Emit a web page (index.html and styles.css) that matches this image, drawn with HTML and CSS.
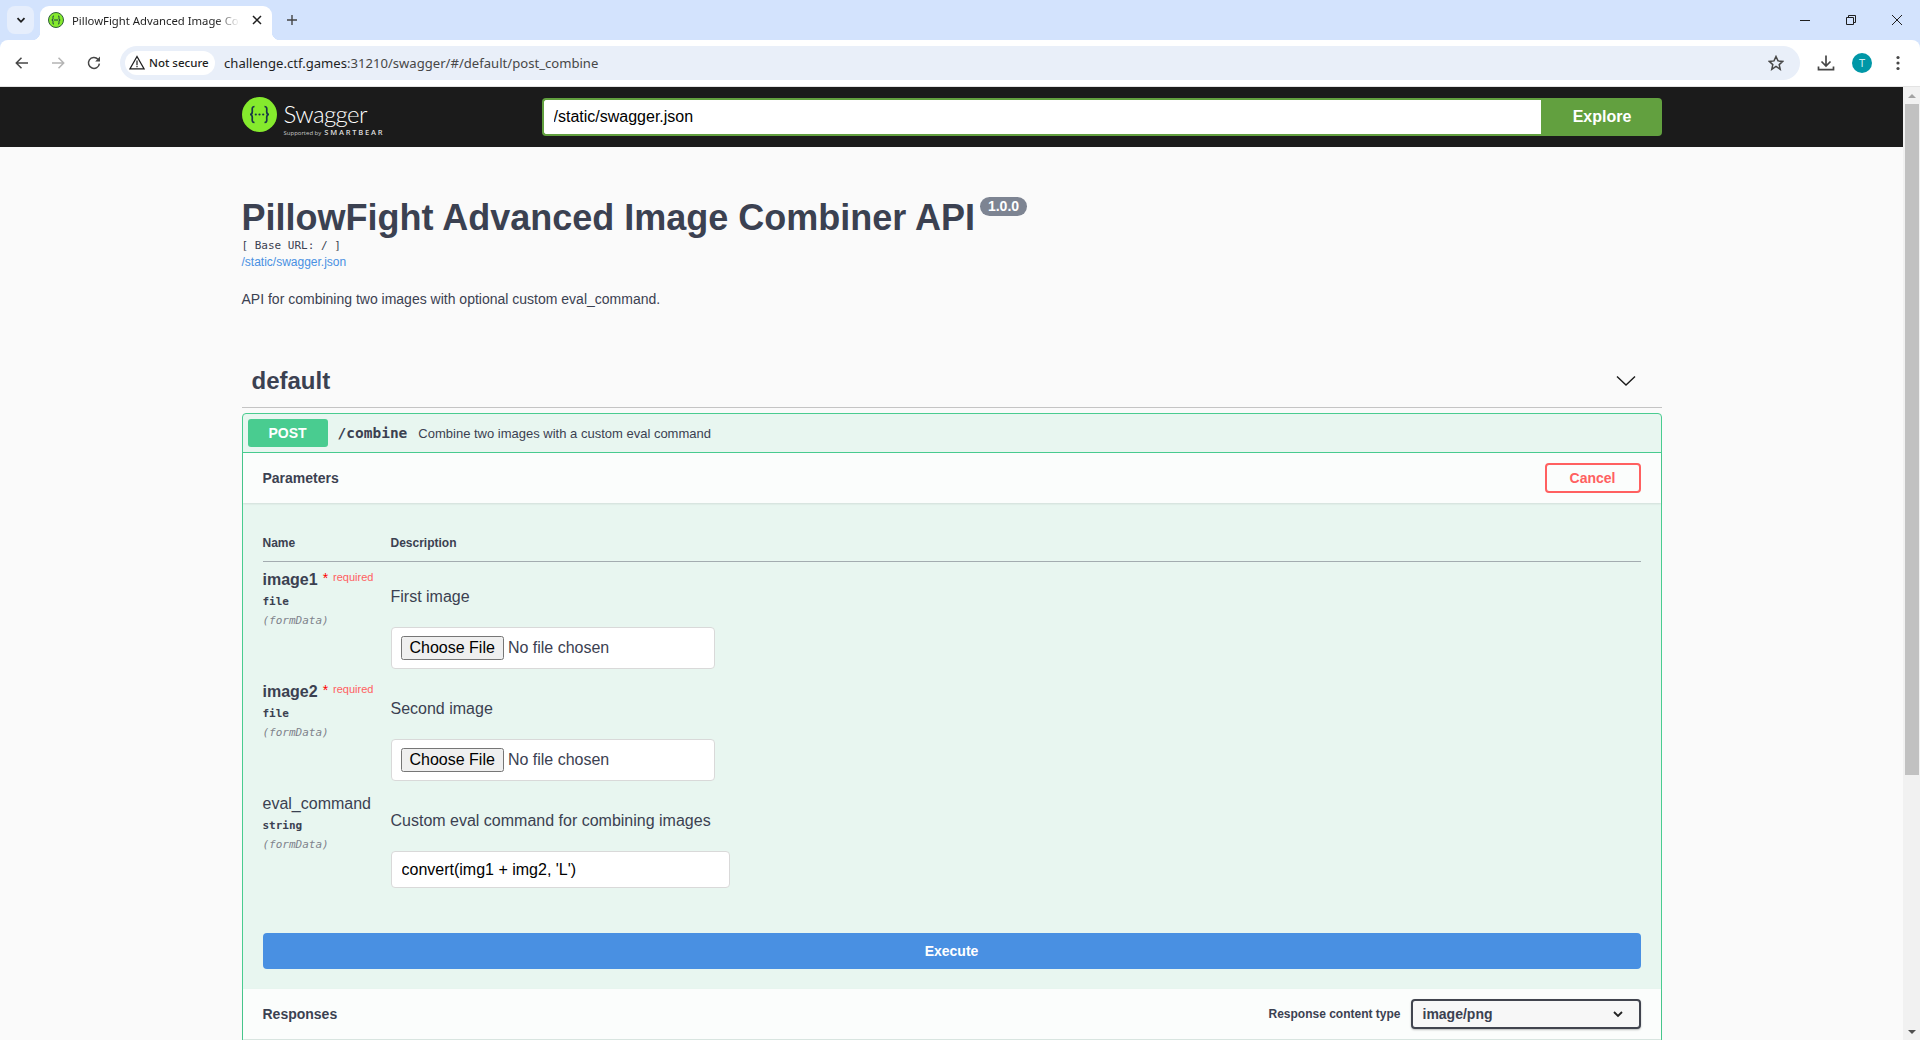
FILE: index.html
```html
<!DOCTYPE html>
<html lang="en">
<head>
  <meta charset="UTF-8" />
  <meta name="viewport" content="width=device-width, initial-scale=1.0" />
  <title>PillowFight Advanced Image Combiner API</title>
  <link rel="stylesheet" href="styles.css">
</head>
<body>
  <div class="tabstrip">
    <div class="tab-search">
      <svg width="12" height="12" viewBox="0 0 12 12"><path d="M2.5 4.2 6 7.8l3.5-3.6" fill="none" stroke="#1f1f1f" stroke-width="1.8"/></svg>
    </div>
    <div class="tab">
      <svg class="favicon" width="16" height="16" viewBox="0 0 16 16">
        <circle cx="8" cy="8" r="7.5" fill="#85ea2d" stroke="#2f5f3a" stroke-width="1"/>
        <path d="M6 3.8C4.6 3.8 5 5.5 5 6.6 5 7.5 4.5 8 3.8 8c.7 0 1.2.5 1.2 1.4 0 1.1-.4 2.8 1 2.8M10 3.8c1.4 0 1 1.7 1 2.8 0 .9.5 1.4 1.2 1.4-.7 0-1.2.5-1.2 1.4 0 1.1.4 2.8-1 2.8M6 8h4" fill="none" stroke="#173647" stroke-width="1"/>
      </svg>
      <span class="tab-title">PillowFight Advanced Image Combiner API</span>
      <svg class="tab-close" width="10" height="10" viewBox="0 0 10 10"><path d="M1 1l8 8M9 1 1 9" stroke="#1f1f1f" stroke-width="1.5"/></svg>
    </div>
    <svg class="tab-new" width="12" height="12" viewBox="0 0 12 12"><path d="M6 1v10M1 6h10" stroke="#444" stroke-width="1.4"/></svg>
    <div class="window-controls">
      <div class="window-btn"><svg width="12" height="12" viewBox="0 0 12 12"><path d="M1 6.5h10" stroke="#1f1f1f"/></svg></div>
      <div class="window-btn"><svg width="12" height="12" viewBox="0 0 12 12"><path d="M1.5 3.5h7v7h-7zM3.5 3.5v-2h7v7h-2" fill="none" stroke="#1f1f1f"/></svg></div>
      <div class="window-btn"><svg width="12" height="12" viewBox="0 0 12 12"><path d="M1 1l10 10M11 1 1 11" stroke="#1f1f1f"/></svg></div>
    </div>
  </div>

  <div class="toolbar">
    <div class="nav-btn"><svg width="16" height="16" viewBox="0 0 16 16"><path d="M14 8H2.5M7.5 2.8 2.3 8l5.2 5.2" fill="none" stroke="#474747" stroke-width="1.5"/></svg></div>
    <div class="nav-btn"><svg width="16" height="16" viewBox="0 0 16 16"><path d="M2 8h11.5M8.5 2.8 13.7 8l-5.2 5.2" fill="none" stroke="#b4b4b4" stroke-width="1.5"/></svg></div>
    <div class="nav-btn"><svg width="16" height="16" viewBox="0 0 16 16"><path d="M13.4 8.6A5.5 5.5 0 1 1 12 4.2L13.5 5.7" fill="none" stroke="#474747" stroke-width="1.5"/><path d="M14 1.6V6.4H9.2z" fill="#474747"/></svg></div>
    <div class="omnibox">
      <div class="chip">
        <svg width="16" height="15" viewBox="0 0 16 15"><path d="M8 1.5 15 13.8H1z" fill="none" stroke="#1f1f1f" stroke-width="1.3"/><path d="M8 5.5v4.5M8 10.8v1.4" stroke="#1f1f1f" stroke-width="1.2"/></svg>
        <span class="chip-text">Not secure</span>
      </div>
      <span class="url"><span class="url-host">challenge.ctf.games</span>:31210/swagger/#/default/post_combine</span>
      <svg class="star" width="16" height="16" viewBox="0 0 16 16"><path d="M8 1.5l2 4.4 4.8.5-3.6 3.2 1 4.7L8 11.4l-4.2 2.9 1-4.7L1.2 6.4 6 5.9z" fill="none" stroke="#474747" stroke-width="1.5"/></svg>
    </div>
    <div class="nav-btn"><svg width="18" height="18" viewBox="0 0 18 18"><path d="M9 1.5v10M4.5 7.5 9 12l4.5-4.5M1.5 12.5v3.2h15v-3.2" fill="none" stroke="#474747" stroke-width="1.7"/></svg></div>
    <div class="nav-btn"><div class="avatar">T</div></div>
    <div class="nav-btn"><svg width="4" height="16" viewBox="0 0 4 16"><circle cx="2" cy="2.5" r="1.6" fill="#474747"/><circle cx="2" cy="8" r="1.6" fill="#474747"/><circle cx="2" cy="13.5" r="1.6" fill="#474747"/></svg></div>
  </div>

  <div class="viewport">
    <div class="page">
      <div class="topbar">
        <div class="container topbar-inner">
          <div class="logo">
            <svg width="35" height="35" viewBox="0 0 35 35">
              <circle cx="17.5" cy="17.5" r="17.5" fill="#85ea2d"/>
              <path d="M12.5 9.5c-3 0-2.2 3.2-2.2 5 0 1.8-.9 3-2.3 3 1.4 0 2.3 1.2 2.3 3 0 1.8-.8 5 2.2 5M22.5 9.5c3 0 2.2 3.2 2.2 5 0 1.8.9 3 2.3 3-1.4 0-2.3 1.2-2.3 3 0 1.8.8 5-2.2 5" fill="none" stroke="#173647" stroke-width="1.7"/>
              <circle cx="13.8" cy="17.5" r="1.1" fill="#173647"/><circle cx="17.5" cy="17.5" r="1.1" fill="#173647"/><circle cx="21.2" cy="17.5" r="1.1" fill="#173647"/>
            </svg>
            <div class="logo-text">
              <span class="logo-name">Swagger</span>
              <span class="logo-sub">Supported by<b>SMARTBEAR</b></span>
            </div>
          </div>
          <div class="explore">
            <input class="explore-input" type="text" value="/static/swagger.json" />
            <button class="explore-btn">Explore</button>
          </div>
        </div>
      </div>

      <div class="container">
        <div class="info">
          <div class="title-row">
            <h2 class="title">PillowFight Advanced Image Combiner API</h2>
            <span class="version">1.0.0</span>
          </div>
          <div class="base-url">[ Base URL: / ]</div>
          <a class="spec-link" href="#">/static/swagger.json</a>
          <p class="desc">API for combining two images with optional custom eval_command.</p>
        </div>

        <div class="tag">
          <span class="tag-name">default</span>
          <svg width="20" height="20" viewBox="0 0 20 20"><path d="M1 5.500 10 14l9-8.500" fill="none" stroke="#1a1a1a" stroke-width="1.400"/></svg>
        </div>

        <div class="opblock">
          <div class="summary">
            <span class="method">POST</span>
            <span class="path">/combine</span>
            <span class="summary-desc">Combine two images with a custom eval command</span>
          </div>

          <div class="section-header">
            <span class="section-title">Parameters</span>
            <button class="cancel-btn">Cancel</button>
          </div>

          <div class="params">
            <div class="params-head">
              <span>Name</span>
              <span>Description</span>
            </div>

            <div class="param">
              <div class="param-name">
                <div class="param-title"><b>image1</b><span class="star-req">*</span><span class="req">required</span></div>
                <div class="param-type">file</div>
                <div class="param-in">(formData)</div>
              </div>
              <div class="param-desc">
                <p>First image</p>
                <input class="file-input" type="file" />
              </div>
            </div>

            <div class="param">
              <div class="param-name">
                <div class="param-title"><b>image2</b><span class="star-req">*</span><span class="req">required</span></div>
                <div class="param-type">file</div>
                <div class="param-in">(formData)</div>
              </div>
              <div class="param-desc">
                <p>Second image</p>
                <input class="file-input" type="file" />
              </div>
            </div>

            <div class="param">
              <div class="param-name">
                <div class="param-title">eval_command</div>
                <div class="param-type">string</div>
                <div class="param-in">(formData)</div>
              </div>
              <div class="param-desc">
                <p>Custom eval command for combining images</p>
                <input class="text-input" type="text" value="convert(img1 + img2, 'L')" />
              </div>
            </div>

            <button class="execute-btn">Execute</button>
          </div>

          <div class="section-header responses-header">
            <span class="section-title">Responses</span>
            <div class="content-type">
              <span class="content-type-label">Response content type</span>
              <div class="select">
                <span>image/png</span>
                <svg width="12" height="12" viewBox="0 0 12 12"><path d="M2 4l4 4 4-4" fill="none" stroke="#222" stroke-width="1.800"/></svg>
              </div>
            </div>
          </div>
          <div class="responses-body"></div>
        </div>
      </div>
    </div>

    <div class="scrollbar">
      <div class="scroll-btn"><span class="arrow-up"></span></div>
      <div class="scroll-thumb"></div>
      <div class="scroll-track"></div>
      <div class="scroll-btn"><span class="arrow-down"></span></div>
    </div>
  </div>
</body>
</html>
```

FILE: styles.css
```css
* {
  box-sizing: border-box;
}

html,
body {
  margin: 0;
  height: 100%;
  overflow: hidden;
}

body {
  display: flex;
  flex-direction: column;
  background: #d3e3fd;
  font-family: "Liberation Sans", Arial, sans-serif;
  color: #3b4151;
}

/* browser chrome */
.tabstrip {
  display: flex;
  height: 40px;
  flex-shrink: 0;
}

.tab-search {
  display: flex;
  align-items: center;
  justify-content: center;
  width: 27px;
  height: 28px;
  margin: 6px 0 0 7px;
  background: #e6eefc;
  border-radius: 8px;
}

.tab {
  position: relative;
  display: flex;
  align-items: center;
  width: 232px;
  height: 34px;
  margin: 6px 0 0 6px;
  padding: 0 10px 6px 8px;
  background: #fff;
  border-radius: 9px 9px 0 0;
}

.tab::before,
.tab::after {
  content: "";
  position: absolute;
  bottom: 0;
  width: 8px;
  height: 8px;
}

.tab::before {
  left: -8px;
  background: radial-gradient(circle at 0 0, #d3e3fd 8px, #fff 8.5px);
}

.tab::after {
  right: -8px;
  background: radial-gradient(circle at 100% 0, #d3e3fd 8px, #fff 8.500px);
}

.favicon {
  flex-shrink: 0;
}

.tab-title {
  flex: 1;
  margin-left: 8px;
  font: 11.300px "Noto Sans", sans-serif;
  color: #1f1f1f;
  white-space: nowrap;
  overflow: hidden;
  -webkit-mask-image: linear-gradient(to right, #000 85%, transparent 100%);
  mask-image: linear-gradient(to right, #000 85%, transparent 100%);
}

.tab-close {
  flex-shrink: 0;
  margin-left: 12px;
}

.tab-new {
  margin: 14px 0 0 14px;
}

.window-controls {
  display: flex;
  margin-left: auto;
}

.window-btn {
  display: flex;
  align-items: center;
  justify-content: center;
  width: 46px;
  height: 40px;
}

.toolbar {
  display: flex;
  align-items: center;
  height: 47px;
  flex-shrink: 0;
  padding: 0 4px 1px;
  background: #fff;
  border-radius: 8px 8px 0 0;
  border-bottom: 1px solid #e3e3e3;
}

.nav-btn {
  display: flex;
  align-items: center;
  justify-content: center;
  width: 36px;
  flex-shrink: 0;
}

.omnibox {
  display: flex;
  align-items: center;
  flex: 1;
  height: 34px;
  margin: 0 8px;
  padding: 0 16px 0 5px;
  background: #e9eff9;
  border-radius: 17px;
}

.chip {
  display: flex;
  align-items: center;
  gap: 4px;
  width: 90px;
  height: 24px;
  padding-left: 4px;
  background: #fff;
  border-radius: 12px;
}

.chip-text {
  font: 500 11.500px "Noto Sans", sans-serif;
  color: #1f1f1f;
}

.url {
  flex: 1;
  margin-left: 9px;
  font: 13.100px "Noto Sans", sans-serif;
  color: #474747;
}

.url-host {
  color: #1f1f1f;
}

.avatar {
  display: flex;
  align-items: center;
  justify-content: center;
  width: 20px;
  height: 20px;
  background: #0097a7;
  border-radius: 50%;
  color: #cfeef2;
  font: 11px "Noto Sans", sans-serif;
}

/* page */
.viewport {
  display: flex;
  flex: 1;
  min-height: 0;
  background: #fafafa;
}

.page {
  flex: 1;
  min-width: 0;
  overflow: hidden;
}

.container {
  max-width: 1460px;
  margin: 0 auto;
  padding: 0 20px;
}

.topbar {
  height: 60px;
  background: #1b1b1b;
}

.topbar-inner {
  display: flex;
  align-items: center;
  height: 100%;
}

.logo {
  display: flex;
  align-items: center;
  gap: 7px;
  width: 300px;
  padding-bottom: 5px;
}

.logo-text {
  display: flex;
  flex-direction: column;
  margin-top: 7px;
  color: #fff;
}

.logo-name {
  font: 300 24px/28px "Lato", sans-serif;
  letter-spacing: -0.600px;
}

.logo-sub {
  font: 6px/8px "Open Sans", sans-serif;
  color: #c8c8c8;
  white-space: nowrap;
}

.logo-sub b {
  margin-left: 3px;
  font-size: 7.500px;
  font-weight: 600;
  letter-spacing: 1.800px;
  color: #ddd;
}

.explore {
  display: flex;
  flex: 1;
  height: 38px;
}

.explore-input {
  flex: 1;
  height: 100%;
  padding: 8px 10px;
  font: 16px "Liberation Sans", Arial, sans-serif;
  color: #000;
  background: #fff;
  border: 2px solid #62a03f;
  border-right: none;
  border-radius: 4px 0 0 4px;
  outline: none;
}

.explore-btn {
  width: 121px;
  padding: 0 0 0 2px;
  font: bold 16px "Liberation Sans", Arial, sans-serif;
  color: #fff;
  background: #62a03f;
  border: none;
  border-radius: 0 4px 4px 0;
}

.info {
  margin-top: 50px;
}

.title-row {
  display: flex;
  align-items: flex-start;
}

.title {
  margin: 0;
  font-size: 36px;
  line-height: 42px;
  font-weight: bold;
}

.version {
  margin-left: 5px;
  padding: 0 8px;
  height: 19px;
  font-size: 14px;
  line-height: 19px;
  font-weight: bold;
  color: #fff;
  background: #7d8492;
  border-radius: 57px;
}

.base-url {
  font: 11px/14px "DejaVu Sans Mono", monospace;
}

.spec-link {
  display: block;
  margin-top: 2px;
  font-size: 12px;
  line-height: 14px;
  color: #4990e2;
  text-decoration: none;
}

.desc {
  margin: 20px 0 0;
  font-size: 14px;
  line-height: 20px;
}

.tag {
  display: flex;
  align-items: center;
  justify-content: space-between;
  height: 49px;
  margin-top: 50px;
  padding: 0 26px 4px 10px;
  border-bottom: 1px solid #c4c4c4;
}

.tag-name {
  font-size: 24px;
  font-weight: bold;
}

.opblock {
  margin-top: 5px;
  background: #e8f6f0;
  border: 1px solid #49cc90;
  border-radius: 4px;
}

.summary {
  display: flex;
  align-items: center;
  padding: 5px;
  border-bottom: 1px solid #49cc90;
}

.method {
  width: 80px;
  height: 28px;
  font-size: 14px;
  font-weight: bold;
  line-height: 28px;
  text-align: center;
  color: #fff;
  background: #49cc90;
  border-radius: 3px;
}

.path {
  margin-left: 10px;
  font: bold 14.500px "DejaVu Sans Mono", monospace;
}

.summary-desc {
  margin-left: 11px;
  font-size: 13px;
}

.section-header {
  display: flex;
  align-items: center;
  justify-content: space-between;
  height: 50px;
  padding: 0 20px;
  background: #fbfdfc;
  box-shadow: 0 1px 2px rgba(0, 0, 0, 0.1);
}

.section-title {
  font-size: 14px;
  font-weight: bold;
}

.cancel-btn {
  width: 96px;
  height: 30px;
  padding: 0;
  font: bold 14px "Liberation Sans", Arial, sans-serif;
  color: #ff6060;
  background: transparent;
  border: 2px solid #ff6060;
  border-radius: 4px;
}

.params {
  padding: 32px 20px 20px;
}

.params-head {
  display: grid;
  grid-template-columns: 128px 1fr;
  padding-bottom: 10px;
  font-size: 12px;
  line-height: 16px;
  font-weight: bold;
  border-bottom: 1px solid #a3acb0;
}

.param {
  display: grid;
  grid-template-columns: 128px 1fr;
  height: 112px;
}

.param-name {
  padding-top: 8px;
}

.param-title {
  display: flex;
  font-size: 16px;
  line-height: 20px;
  white-space: nowrap;
}

.star-req {
  margin-left: 5px;
  color: #ff0000;
  font-size: 14px;
  line-height: 16px;
}

.req {
  margin-left: 5px;
  font-size: 11px;
  line-height: 14px;
  color: #ff6060;
}

.param-type {
  margin-top: 4px;
  font: bold 11px/16px "DejaVu Sans Mono", monospace;
}

.param-in {
  margin-top: 3px;
  font: italic 11px/16px "DejaVu Sans Mono", monospace;
  color: #7f838c;
}

.param-desc {
  padding-top: 25px;
}

.param-desc p {
  margin: 0 0 20px;
  font-size: 16px;
  line-height: 20px;
}

.file-input {
  display: block;
  width: 324px;
  height: 42px;
  padding: 8px 9px;
  font: 16px "Liberation Sans", Arial, sans-serif;
  color: #3b4151;
  background: #fff;
  border: 1px solid #d9d9d9;
  border-radius: 4px;
}

.file-input::file-selector-button {
  padding: 1px 7px;
}

.text-input {
  display: block;
  width: 339px;
  height: 37px;
  padding: 8px 10px;
  font: 16px "Liberation Sans", Arial, sans-serif;
  color: #000;
  background: #fff;
  border: 1px solid #d9d9d9;
  border-radius: 4px;
}

.execute-btn {
  display: block;
  width: 100%;
  height: 36px;
  margin-top: 35px;
  font: bold 14px "Liberation Sans", Arial, sans-serif;
  color: #fff;
  background: #4990e2;
  border: none;
  border-radius: 4px;
}

.content-type {
  display: flex;
  align-items: center;
  gap: 10px;
}

.content-type-label {
  font-size: 12px;
  font-weight: bold;
}

.select {
  display: flex;
  align-items: center;
  justify-content: space-between;
  width: 230px;
  height: 30px;
  padding: 0 15px 0 10px;
  font-size: 14px;
  font-weight: bold;
  background: #f7f7f7;
  border: 2px solid #41444e;
  border-radius: 4px;
  box-shadow: 0 1px 2px rgba(0, 0, 0, 0.25);
}

.responses-body {
  height: 120px;
}

/* scrollbar */
.scrollbar {
  display: flex;
  flex-direction: column;
  width: 17px;
  flex-shrink: 0;
  background: #f1f1f1;
}

.scroll-btn {
  display: flex;
  align-items: center;
  justify-content: center;
  height: 17px;
}

.arrow-up {
  border: 4px solid transparent;
  border-top: none;
  border-bottom: 4px solid #a3a3a3;
}

.arrow-down {
  border: 4px solid transparent;
  border-bottom: none;
  border-top: 4px solid #505050;
}

.scroll-thumb {
  height: 671px;
  margin: 0 1px 0 2px;
  background: #c1c1c1;
}

.scroll-track {
  flex: 1;
}
```
